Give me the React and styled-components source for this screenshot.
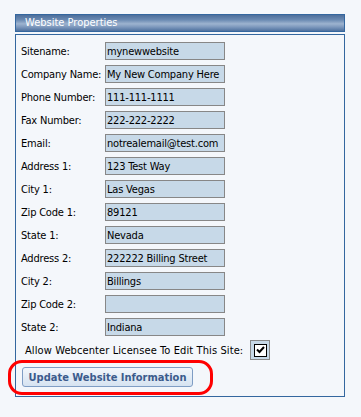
import React from 'react'
import styled, { createGlobalStyle } from 'styled-components'

const Global = createGlobalStyle`
  body {
    margin: 0;
    background: #f4f7fb;
    font-family: "DejaVu Sans Condensed", "Liberation Sans", sans-serif;
    font-size: 11px;
    color: #000;
  }
`;

const Panel = styled.div`
  width: 330px;
  margin: 14px 0 0 15px;
`;

const Header = styled.div`
  height: 18px;
  box-sizing: border-box;
  border: 1px solid #34679f;
  background: linear-gradient(#4d6f9c 0%, #6a8ab2 30%, #9db3cf 55%, #7d98bd 75%, #4f719e 100%);
  color: #fff;
  padding-left: 9px;
  line-height: 16px;
`;

const Body = styled.div`
  margin-top: 2px;
  border: 1px solid #34679f;
  height: 363px;
  box-sizing: border-box;
  padding: 7px 5px 0 5px;
`;

const Fields = styled.div`
  display: grid;
  grid-template-columns: 84px 120px;
  row-gap: 5px;
  align-items: center;
`;

const Label = styled.label`
  white-space: nowrap;
  letter-spacing: -0.2px;
`;

const Input = styled.input`
  box-sizing: border-box;
  width: 120px;
  height: 18px;
  margin: 0;
  padding: 0 0 0 1px;
  border: 1px solid #878787;
  background: #c7d9e8;
  font: inherit;
  letter-spacing: -0.2px;
  color: #000;
  outline: none;
`;

const AllowRow = styled.div`
  display: flex;
  align-items: center;
  gap: 7px;
  margin: 4px 0 0 4px;
`;

const AllowText = styled.span`
  letter-spacing: 0.1px;
`;

const CheckFrame = styled.span`
  display: inline-flex;
  align-items: center;
  justify-content: center;
  width: 20px;
  height: 20px;
  box-sizing: border-box;
  border: 1px solid #8a8a8a;
  background: #c7d9e8;
`;

const Check = styled.span`
  display: flex;
  align-items: center;
  justify-content: center;
  width: 13px;
  height: 13px;
  box-sizing: border-box;
  border: 1px solid #000;
  background: #fff;
`;

const Ring = styled.div`
  display: inline-block;
  margin: 0 0 0 -13px;
  padding: 4px 17px 5px 11px;
  border: 3px solid #f00;
  border-radius: 14px;
`;

const Button = styled.button`
  display: block;
  width: 171px;
  height: 20px;
  padding: 0;
  border: 1px solid #7f9dc4;
  border-radius: 3px;
  background: linear-gradient(#f2f6fb, #d6e3f1);
  color: #3b5b8c;
  font: bold 11px "DejaVu Sans Condensed", "Liberation Sans", sans-serif;
  cursor: pointer;
`;

const rows = [
  ['Sitename:', 'mynewwebsite'],
  ['Company Name:', 'My New Company Here'],
  ['Phone Number:', '111-111-1111'],
  ['Fax Number:', '222-222-2222'],
  ['Email:', 'notrealemail@test.com'],
  ['Address 1:', '123 Test Way'],
  ['City 1:', 'Las Vegas'],
  ['Zip Code 1:', '89121'],
  ['State 1:', 'Nevada'],
  ['Address 2:', '222222 Billing Street'],
  ['City 2:', 'Billings'],
  ['Zip Code 2:', ''],
  ['State 2:', 'Indiana'],
];

export default function App() {
  return (
    <>
      <Global />
      <Panel>
        <Header>Website Properties</Header>
        <Body>
          <Fields>
            {rows.map(([label, value]) => (
              <React.Fragment key={label}>
                <Label>{label}</Label>
                <Input defaultValue={value} />
              </React.Fragment>
            ))}
          </Fields>
          <AllowRow>
            <AllowText>Allow Webcenter Licensee To Edit This Site:</AllowText>
            <CheckFrame>
              <Check>
                <svg width="9" height="8" viewBox="0 0 9 8">
                  <path d="M1 3.5 L3.5 6 L8 1" fill="none" stroke="#000" strokeWidth="2" />
                </svg>
              </Check>
            </CheckFrame>
          </AllowRow>
          <Ring>
            <Button>Update Website Information</Button>
          </Ring>
        </Body>
      </Panel>
    </>
  )
}
